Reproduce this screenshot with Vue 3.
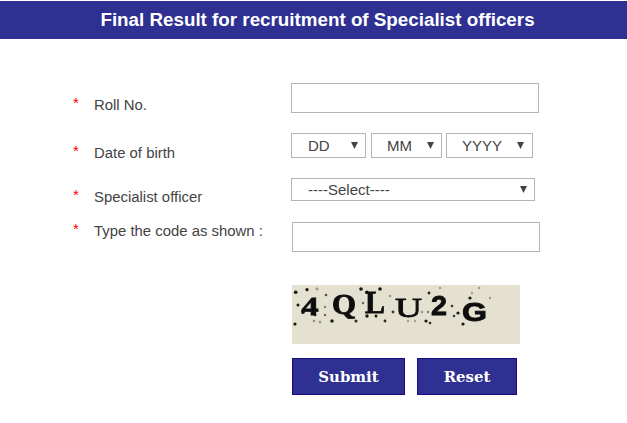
<script setup>
const days = ['DD']
const months = ['MM']
const years = ['YYYY']
const letters = [
  { c: '4', x: 9.5, y: 30, s: 26, l: 17, f: 'Liberation Serif', w: 700 },
  { c: 'Q', x: 40, y: 29, s: 29, l: 24, f: 'Liberation Serif', w: 700 },
  { c: 'L', x: 73, y: 28, s: 31, l: 20, f: 'Liberation Serif', w: 700 },
  { c: 'U', x: 103, y: 32, s: 27, l: 27, f: 'Liberation Serif', w: 400 },
  { c: '2', x: 139, y: 30, s: 28, l: 16, f: 'Liberation Sans', w: 700 },
  { c: 'G', x: 170, y: 36, s: 25, l: 25, f: 'Liberation Sans', w: 700 }
]
const dots = [
  [3.7,7.3,1.8,1],[15,4.7,1.6,1],[25,4,1.4,.35],[34,10,1.3,.7],[6,20,1.5,1],[11,27,1.9,1],[3,39,1.6,1],[23,30,1.3,.9],
  [22,36,1.3,.4],[28,37,1.3,.4],[40,36,1.7,1],[33,22,1.2,.5],[33,30,1.2,.6],[64,36,1.5,.9],[69,4,1.8,1],[75,7,1.6,1],
  [88,4,1.8,1],[98,11,1.2,.4],[75,31,1.7,1],[84,31,1.5,1],[93,36,1.4,.9],[101,27,1.4,.8],[71,18,1.2,.6],
  [137,8,1.4,.9],[148,3,1.2,.35],[178,13,1.6,1],[180,8,1.2,.35],[187,3,1.2,.35],[198,13,1.2,.35],[160,21,1.3,.8],
  [166,28,1.6,1],[162,31,1.3,.8],[171,39,1.6,1],[134,36,1.6,1],[138,38,1.3,.9],[116,36,1.2,.35],[123,36,1.2,.35],
  [130,27,1.2,.4],[136,27,1.2,.5]
]
</script>

<template>
  <div class="page">
    <h1 class="title">Final Result for recruitment of Specialist officers</h1>
    <form class="form" @submit.prevent>
      <div class="row row-roll">
        <label class="label"><span class="star">*</span>Roll No.</label>
        <input class="text" type="text" />
      </div>
      <div class="row row-dob">
        <label class="label"><span class="star">*</span>Date of birth</label>
        <div class="dob">
          <select class="sel dd"><option v-for="d in days" :key="d">{{ d }}</option></select>
          <select class="sel mm"><option v-for="m in months" :key="m">{{ m }}</option></select>
          <select class="sel yy"><option v-for="y in years" :key="y">{{ y }}</option></select>
        </div>
      </div>
      <div class="row row-spec">
        <label class="label"><span class="star">*</span>Specialist officer</label>
        <select class="sel spec"><option>----Select----</option></select>
      </div>
      <div class="row row-code">
        <label class="label"><span class="star">*</span>Type the code as shown :</label>
        <input class="text shifted" type="text" />
      </div>
      <div class="captcha">
        <svg width="228" height="59" viewBox="0 0 228 59">
          <defs>
            <filter id="soft" x="-5%" y="-5%" width="110%" height="110%">
              <feGaussianBlur stdDeviation="0.45" />
            </filter>
          </defs>
          <rect width="228" height="59" fill="#e4e1d1" />
          <g filter="url(#soft)">
            <circle v-for="(d, i) in dots" :key="i" :cx="d[0]" :cy="d[1]" :r="d[2]" :opacity="d[3]" fill="#14140f" />
            <text v-for="l in letters" :key="l.c" :x="l.x" :y="l.y" :font-size="l.s" :font-family="l.f" :font-weight="l.w" :textLength="l.l" lengthAdjust="spacingAndGlyphs" fill="#0d0d0a" stroke="#0d0d0a" stroke-width="0.8">{{ l.c }}</text>
          </g>
        </svg>
      </div>
      <div class="actions">
        <button class="btn submit" type="submit">Submit</button>
        <button class="btn reset" type="reset">Reset</button>
      </div>
    </form>
  </div>
</template>

<style scoped>
.page {
  width: 627px;
  height: 423px;
  padding-top: 1px;
  box-sizing: border-box;
  background: #fff;
  overflow: hidden;
  font-family: "Liberation Sans", Arial, sans-serif;
}
.title {
  margin: 0;
  height: 38px;
  line-height: 38px;
  padding-left: 8px;
  background: #2e3192;
  color: #fff;
  font-size: 18.8px;
  font-weight: 700;
  text-align: center;
}
.form {
  padding: 44px 0 0 73px;
}
.row {
  display: flex;
  align-items: flex-start;
}
.row-roll { height: 30px; margin-bottom: 20px; }
.row-dob { height: 25px; margin-bottom: 20px; }
.row-spec { height: 23px; margin-bottom: 21px; }
.row-code { height: 30px; margin-bottom: 33px; }
.label {
  width: 218px;
  flex: none;
  display: flex;
  color: #444;
  font-size: 14.9px;
  line-height: 16px;
}
.row-roll .label { padding-top: 14px; }
.row-dob .label { padding-top: 12px; }
.row-spec .label { padding-top: 11px; }
.row-code .label { padding-top: 1px; }
.star {
  width: 21px;
  flex: none;
  color: #f00;
  position: relative;
  top: -2px;
}
.text {
  width: 248px;
  height: 30px;
  box-sizing: border-box;
  border: 1px solid #b5b5b5;
  background: #fff;
  padding: 0 6px;
  margin: 0;
  outline: none;
}
.shifted { margin-left: 1px; }
.dob {
  display: flex;
  gap: 5px;
}
.dob .sel + .sel.yy { margin-left: -1px; }
.sel {
  appearance: none;
  -webkit-appearance: none;
  box-sizing: border-box;
  height: 25px;
  margin: 0;
  border: 1px solid #b5b5b5;
  border-radius: 0;
  font-family: "Liberation Sans", Arial, sans-serif;
  font-size: 15px;
  color: #444;
  outline: none;
  background-color: #fff;
  background-image: url("data:image/svg+xml,%3Csvg xmlns='http://www.w3.org/2000/svg' width='7' height='7'%3E%3Cpath d='M0 0H7L3.5 7Z' fill='%23444'/%3E%3C/svg%3E");
  background-repeat: no-repeat;
}
.dd { width: 75px; padding-left: 16px; background-position: 59px 8px; }
.mm { width: 71px; padding-left: 15px; background-position: 55px 8px; }
.yy { width: 87px; padding-left: 15px; background-position: 70px 8px; }
.spec { width: 244px; height: 23px; padding-left: 16px; background-position: 228px 7px; }
.captcha {
  margin-left: 219px;
  height: 59px;
  margin-bottom: 14px;
}
.captcha svg { display: block; }
.actions {
  margin-left: 219px;
  display: flex;
  gap: 12px;
}
.btn {
  height: 37px;
  margin: 0;
  padding: 0;
  box-sizing: border-box;
  border: 1px solid #1a0a80;
  border-radius: 0;
  background: #2e3192;
  color: #fff;
  font-family: "DejaVu Serif", Verdana, sans-serif;
  font-size: 14.9px;
  font-weight: 700;
}
.submit { width: 113px; }
.reset { width: 100px; }
</style>
